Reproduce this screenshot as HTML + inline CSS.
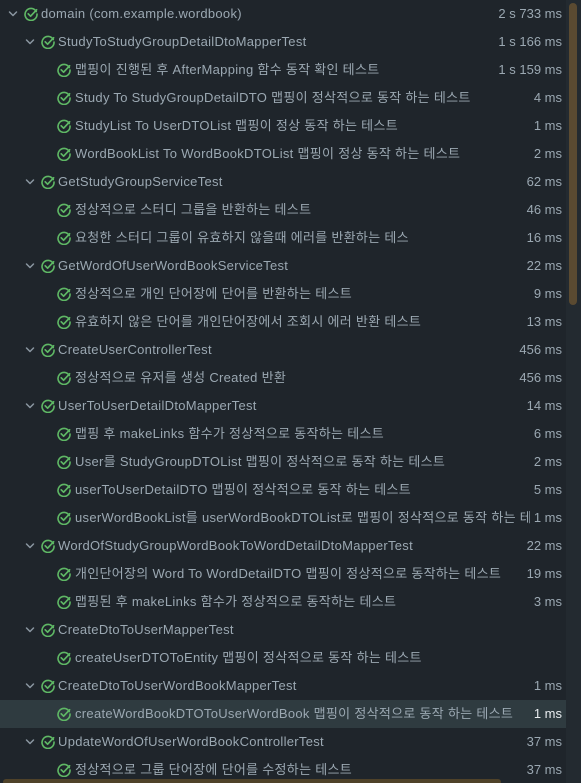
<!DOCTYPE html>
<html><head><meta charset="utf-8"><style>
*{margin:0;padding:0;box-sizing:border-box}
html,body{width:581px;height:783px;overflow:hidden;background:#1f252b}
body{position:relative;font-family:"Liberation Sans","Noto Sans CJK KR",sans-serif;font-size:13px;color:#9ba8b2}
.r{position:absolute;left:0;width:566px;height:28px;line-height:28px;white-space:nowrap}
.chev{position:absolute;top:10px;width:10px;height:8px}
.ck{position:absolute;top:7px;width:14px;height:14px}
.chev svg,.ck svg{display:block}
.t{position:absolute;top:0;letter-spacing:0.3px}
.d{position:absolute;right:4px;top:0;padding-left:4px}
.r.sel .d{color:#e8ecef}
.track{position:absolute;left:566px;top:0;width:15px;height:783px;background:#232a30}
.thumb{position:absolute;left:569px;top:3px;width:8px;height:302px;background:#5a4a31;border-radius:4px}
.bot{position:absolute;left:3px;top:779px;width:498px;height:6px;background:#4f4229;border-radius:3px}
</style></head><body>
<div class="track"></div><div class="thumb"></div>
<div id="list"></div>
<div class="bot"></div>
<script>
var rows=[
[0,"domain (com.example.wordbook)","2 s 733 ms"],
[1,"StudyToStudyGroupDetailDtoMapperTest","1 s 166 ms"],
[2,"맵핑이 진행된 후 AfterMapping 함수 동작 확인 테스트","1 s 159 ms"],
[2,"Study To StudyGroupDetailDTO 맵핑이 정삭적으로 동작 하는 테스트","4 ms"],
[2,"StudyList To UserDTOList 맵핑이 정상 동작 하는 테스트","1 ms"],
[2,"WordBookList To WordBookDTOList 맵핑이 정상 동작 하는 테스트","2 ms"],
[1,"GetStudyGroupServiceTest","62 ms"],
[2,"정상적으로 스터디 그룹을 반환하는 테스트","46 ms"],
[2,"요청한 스터디 그룹이 유효하지 않을때 에러를 반환하는 테스","16 ms"],
[1,"GetWordOfUserWordBookServiceTest","22 ms"],
[2,"정상적으로 개인 단어장에 단어를 반환하는 테스트","9 ms"],
[2,"유효하지 않은 단어를 개인단어장에서 조회시 에러 반환 테스트","13 ms"],
[1,"CreateUserControllerTest","456 ms"],
[2,"정상적으로 유저를 생성 Created 반환","456 ms"],
[1,"UserToUserDetailDtoMapperTest","14 ms"],
[2,"맵핑 후 makeLinks 함수가 정상적으로 동작하는 테스트","6 ms"],
[2,"User를 StudyGroupDTOList 맵핑이 정삭적으로 동작 하는 테스트","2 ms"],
[2,"userToUserDetailDTO 맵핑이 정삭적으로 동작 하는 테스트","5 ms"],
[2,"userWordBookList를 userWordBookDTOList로 맵핑이 정삭적으로 동작 하는 테스트","1 ms"],
[1,"WordOfStudyGroupWordBookToWordDetailDtoMapperTest","22 ms"],
[2,"개인단어장의 Word To WordDetailDTO 맵핑이 정상적으로 동작하는 테스트","19 ms"],
[2,"맵핑된 후 makeLinks 함수가 정상적으로 동작하는 테스트","3 ms"],
[1,"CreateDtoToUserMapperTest",""],
[2,"createUserDTOToEntity 맵핑이 정삭적으로 동작 하는 테스트",""],
[1,"CreateDtoToUserWordBookMapperTest","1 ms"],
[2,"createWordBookDTOToUserWordBook 맵핑이 정삭적으로 동작 하는 테스트","1 ms",1],
[1,"UpdateWordOfUserWordBookControllerTest","37 ms"],
[2,"정상적으로 그룹 단어장에 단어를 수정하는 테스트","37 ms"]];
var ck='<svg viewBox="0 0 14 14" width="14" height="14"><path d="M12.3 4.6A6 6 0 1 0 13 7" fill="none" stroke="#5fb865" stroke-width="1.6" stroke-linecap="round"/><path d="M4.2 6.8L6.6 9.2L12.6 2.8" fill="none" stroke="#5fb865" stroke-width="1.7" stroke-linecap="round" stroke-linejoin="round"/></svg>';
var chev='<svg viewBox="0 0 10 8" width="10" height="8"><path d="M1.5 2L5 5.5L8.5 2" fill="none" stroke="#8a96a0" stroke-width="1.5" stroke-linecap="round" stroke-linejoin="round"/></svg>';
var h='';
rows.forEach(function(r,i){
 var lv=r[0],top=i*28;
 var cx=[8,25,0][lv], kx=[24,41,57][lv], tx=[41,58,75][lv];
 var bg=r[3]?'#2f3b40':'#1f252b';
 h+='<div class="r'+(r[3]?' sel':'')+'" style="top:'+top+'px;background:'+bg+'">';
 if(lv<2)h+='<span class="chev" style="left:'+cx+'px">'+chev+'</span>';
 h+='<span class="ck" style="left:'+kx+'px">'+ck+'</span>';
 h+='<span class="t" style="left:'+tx+'px">'+r[1]+'</span>';
 if(r[2])h+='<span class="d" style="background:'+bg+'">'+r[2]+'</span>';
 h+='</div>';
});
document.getElementById('list').innerHTML=h;
</script>
</body></html>
